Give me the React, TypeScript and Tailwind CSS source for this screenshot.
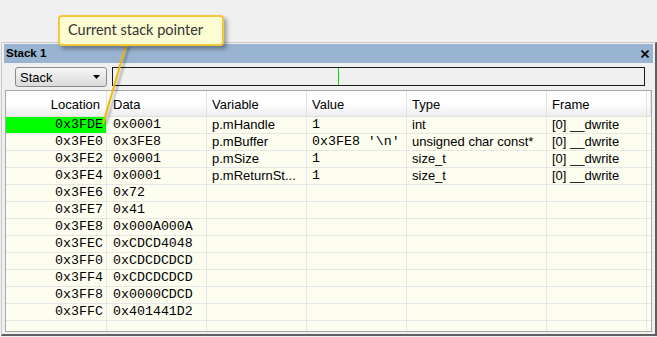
import React from "react";

const rows: string[][] = [
  ["0x3FDE", "0x0001", "p.mHandle", "1", "int", "[0] __dwrite"],
  ["0x3FE0", "0x3FE8", "p.mBuffer", "0x3FE8 '\\n'", "unsigned char const*", "[0] __dwrite"],
  ["0x3FE2", "0x0001", "p.mSize", "1", "size_t", "[0] __dwrite"],
  ["0x3FE4", "0x0001", "p.mReturnSt...", "1", "size_t", "[0] __dwrite"],
  ["0x3FE6", "0x72", "", "", "", ""],
  ["0x3FE7", "0x41", "", "", "", ""],
  ["0x3FE8", "0x000A000A", "", "", "", ""],
  ["0x3FEC", "0xCDCD4048", "", "", "", ""],
  ["0x3FF0", "0xCDCDCDCD", "", "", "", ""],
  ["0x3FF4", "0xCDCDCDCD", "", "", "", ""],
  ["0x3FF8", "0x0000CDCD", "", "", "", ""],
  ["0x3FFC", "0x401441D2", "", "", "", ""],
];

const mono = { fontFamily: '"Liberation Mono", "Courier New", monospace' };

function Row({ r, idx }: { r: string[]; idx: number }) {
  const cell = "h-full border-r border-[#e6e6e6] flex items-center whitespace-nowrap overflow-hidden";
  return (
    <div className="flex h-[17px] border-b border-[#e6e6e6] shrink-0">
      <div
        className={`${cell} w-[101px] justify-end pr-[3px] text-[13.3px] ${idx === 0 ? "bg-[#00ff00]" : ""}`}
        style={mono}
      >
        {r[0]}
      </div>
      <div className={`${cell} w-[100px] pl-[6px] text-[13.3px]`} style={mono}>
        {r[1]}
      </div>
      <div className={`${cell} w-[100px] pl-[5px] text-[13px]`}>{r[2]}</div>
      <div className={`${cell} w-[100px] pl-[5px] text-[13.3px]`} style={mono}>
        {r[3]}
      </div>
      <div className={`${cell} w-[140px] pl-[5px] text-[13px]`}>{r[4]}</div>
      <div className={`${cell} w-[100px] pl-[5px] text-[13px]`}>{r[5]}</div>
      <div className="flex-1" />
    </div>
  );
}

export default function App() {
  const hcell =
    "h-full border-r border-[#e3e3e3] flex items-center whitespace-nowrap pt-[2px] text-[13px]";
  return (
    <div
      className="relative w-[657px] h-[337px] bg-[#f0f0f0] overflow-hidden text-black"
      style={{ fontFamily: '"Liberation Sans", Arial, sans-serif' }}
    >
      {/* window */}
      <div className="mt-[42px] ml-[1px] w-[656px] h-[294px] border-t border-l border-[#c9c9c9] border-r-2 border-b-2 border-r-[#5f5f5f] border-b-[#5f5f5f] pl-[2px] pr-[2px] pt-[1px] pb-[2px] flex flex-col">
        {/* title bar */}
        <div className="h-[19px] bg-[#99b4d1] flex items-center justify-between pl-[2px] pr-[4px] shrink-0">
          <span className="font-bold text-[11.5px] leading-none pt-[1px]">Stack 1</span>
          <svg width="8" height="8" viewBox="0 0 8 8">
            <path d="M0.5 0.5 L7.5 7.5 M7.5 0.5 L0.5 7.5" stroke="#000" strokeWidth="1.8" />
          </svg>
        </div>
        {/* toolbar */}
        <div className="h-[27px] flex items-start pt-[4px] shrink-0">
          <div className="ml-[11px] w-[92px] h-[20px] rounded-[3px] border border-[#8b8b8b] bg-gradient-to-b from-[#f6f6f6] to-[#dadada] flex items-center justify-between pl-[4px] pr-[6px]">
            <span className="text-[13px] leading-none">Stack</span>
            <svg width="7" height="4" viewBox="0 0 7 4">
              <path d="M0 0 L7 0 L3.5 4 Z" fill="#000" />
            </svg>
          </div>
          <div className="ml-[5px] w-[533px] h-[19px] border border-[#1a1a1a] bg-[#f0f0f0] flex">
            <div className="ml-[225px] w-[1px] h-full bg-[#00e000]" />
          </div>
        </div>
        {/* grid */}
        <div className="mx-[1px] flex-1 border border-[#a8a8a8] bg-[#fdfdf0] flex flex-col overflow-hidden">
          <div className="h-[26px] flex border-b border-[#e0e0e0] bg-gradient-to-b from-white via-white to-[#ededed] shrink-0">
            <div className={`${hcell} w-[101px] justify-end pr-[6px]`}>Location</div>
            <div className={`${hcell} w-[100px] pl-[6px]`}>Data</div>
            <div className={`${hcell} w-[100px] pl-[5px]`}>Variable</div>
            <div className={`${hcell} w-[100px] pl-[5px]`}>Value</div>
            <div className={`${hcell} w-[140px] pl-[5px]`}>Type</div>
            <div className={`${hcell} w-[100px] pl-[5px]`}>Frame</div>
            <div className="flex-1 border-r border-[#e3e3e3] mr-[0px]" />
          </div>
          {rows.map((r, i) => (
            <Row key={i} r={r} idx={i} />
          ))}
          <div className="flex flex-1">
            <div className="w-[101px] border-r border-[#e6e6e6]" />
            <div className="w-[100px] border-r border-[#e6e6e6]" />
            <div className="w-[100px] border-r border-[#e6e6e6]" />
            <div className="w-[100px] border-r border-[#e6e6e6]" />
            <div className="w-[140px] border-r border-[#e6e6e6]" />
            <div className="w-[100px] border-r border-[#e6e6e6]" />
          </div>
        </div>
      </div>

      {/* callout pointer */}
      <svg className="absolute left-0 top-0 pointer-events-none" width="657" height="337">
        <defs>
          <filter id="blur" x="-50%" y="-50%" width="200%" height="200%">
            <feGaussianBlur stdDeviation="1.2" />
          </filter>
        </defs>
        <line x1="129" y1="47" x2="106" y2="125" stroke="rgba(0,0,0,0.3)" strokeWidth="2" filter="url(#blur)" />
        <line x1="126" y1="45" x2="103" y2="124" stroke="#f2b800" strokeWidth="2" />
      </svg>

      {/* callout box */}
      <div
        className="absolute left-[58px] top-[15px] w-[166px] h-[31px] rounded-[4px] border-2 border-[#f1c93a] bg-[#fdfdd3] flex items-center pl-[8px] text-[#333]"
        style={{ boxShadow: "3px 3px 4px rgba(0,0,0,0.35)", fontFamily: "Lato, sans-serif" }}
      >
        <span className="text-[14.5px] leading-none">Current stack pointer</span>
      </div>
    </div>
  );
}
